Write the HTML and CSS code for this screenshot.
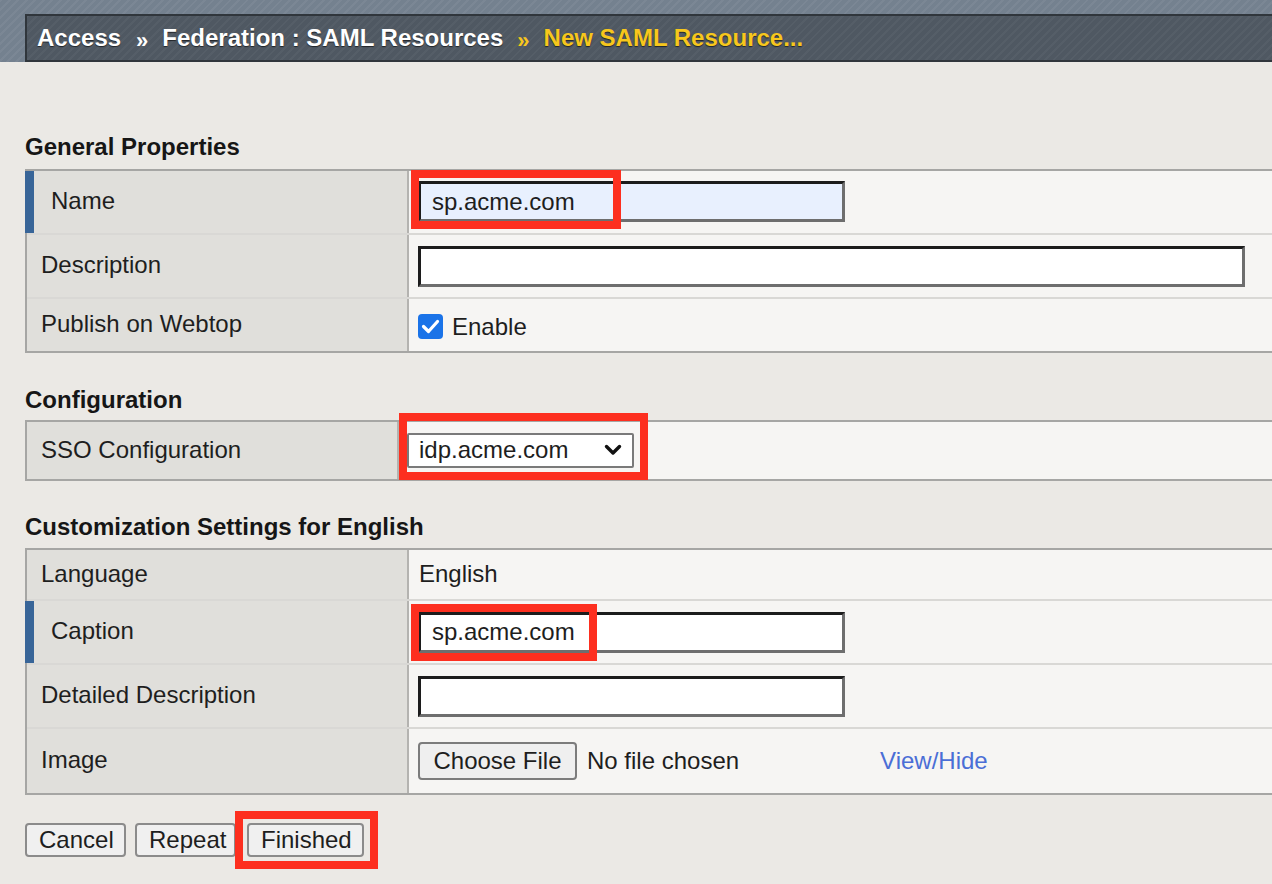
FILE: index.html
```html
<!DOCTYPE html>
<html lang="en">
<head>
<meta charset="utf-8">
<title>New SAML Resource</title>
<link rel="stylesheet" href="styles.css">
</head>
<body>
<header class="topbar">
  <div class="crumbs">
    <span class="crumb">Access</span>
    <span class="sep">»</span>
    <span class="crumb">Federation : SAML Resources</span>
    <span class="sep current">»</span>
    <span class="crumb current">New SAML Resource...</span>
  </div>
</header>

<main class="main">
  <section class="section sec-general">
    <h2 class="sec-title">General Properties</h2>
    <div class="props cols-wide">
      <div class="row h-62">
        <div class="lbl req">Name</div>
        <div class="val">
          <input class="field field-mid autofill" type="text" value="sp.acme.com">
          <span class="hl hl-name"></span>
        </div>
      </div>
      <div class="row h-64">
        <div class="lbl">Description</div>
        <div class="val">
          <input class="field field-long" type="text" value="">
        </div>
      </div>
      <div class="row h-54">
        <div class="lbl">Publish on Webtop</div>
        <div class="val">
          <span class="check">
            <svg width="25" height="25" viewBox="0 0 25 25"><rect x="0" y="0" width="25" height="25" rx="4" fill="#1a73e8"/><polyline points="5.5,12.5 10.5,17.5 19.5,7.5" fill="none" stroke="#fff" stroke-width="3.2" stroke-linecap="round" stroke-linejoin="round"/></svg>
          </span>
          <span class="check-label">Enable</span>
        </div>
      </div>
    </div>
  </section>

  <section class="section sec-config">
    <h2 class="sec-title">Configuration</h2>
    <div class="props cols-narrow">
      <div class="row h-57">
        <div class="lbl">SSO Configuration</div>
        <div class="val val-sel">
          <span class="select">
            <span class="select-text">idp.acme.com</span>
            <svg class="chev" width="18" height="12" viewBox="0 0 18 12"><polyline points="2.5,2.5 9,9 15.5,2.5" fill="none" stroke="#111" stroke-width="3.4" stroke-linecap="round" stroke-linejoin="round"/></svg>
          </span>
          <span class="hl hl-sel"></span>
        </div>
      </div>
    </div>
  </section>

  <section class="section sec-custom">
    <h2 class="sec-title">Customization Settings for English</h2>
    <div class="props cols-wide">
      <div class="row h-49">
        <div class="lbl">Language</div>
        <div class="val val-text">English</div>
      </div>
      <div class="row h-64">
        <div class="lbl req">Caption</div>
        <div class="val">
          <input class="field field-mid" type="text" value="sp.acme.com">
          <span class="hl hl-caption"></span>
        </div>
      </div>
      <div class="row h-64">
        <div class="lbl">Detailed Description</div>
        <div class="val">
          <input class="field field-mid" type="text" value="">
        </div>
      </div>
      <div class="row h-66">
        <div class="lbl">Image</div>
        <div class="val">
          <span class="filebtn">Choose File</span>
          <span class="nofile">No file chosen</span>
          <a class="link" href="#">View/Hide</a>
        </div>
      </div>
    </div>
  </section>

  <div class="actions">
    <button class="btn" type="button">Cancel</button>
    <button class="btn" type="button">Repeat</button>
    <span class="btn-wrap">
      <button class="btn" type="button">Finished</button>
      <span class="hl hl-finish"></span>
    </span>
  </div>
</main>
</body>
</html>
```

FILE: styles.css
```css
html, body {
  margin: 0;
  padding: 0;
}

body {
  width: 1272px;
  height: 884px;
  overflow: hidden;
  background: #ebe9e5;
  font-family: "Liberation Sans", Arial, sans-serif;
  font-size: 24px;
  color: #1e1e1e;
}

/* ---------- top bar ---------- */
.topbar {
  height: 62px;
  padding: 14px 0 0 25px;
  box-sizing: border-box;
  background:
    repeating-linear-gradient(135deg, rgba(255,255,255,0.05) 0 2px, rgba(0,0,0,0) 2px 6px),
    #74818f;
}

.crumbs {
  height: 48px;
  box-sizing: border-box;
  border: 2px solid #30363c;
  border-right: none;
  background:
    repeating-linear-gradient(135deg, rgba(255,255,255,0.035) 0 2px, rgba(0,0,0,0) 2px 6px),
    #4f5862;
  display: flex;
  align-items: center;
  padding-left: 10px;
  white-space: nowrap;
}

.crumb {
  font-weight: bold;
  font-size: 24px;
  color: #ffffff;
  text-shadow: 0 1px 1px rgba(0,0,0,0.6);
}

.crumb.current {
  color: #f7c71c;
}

.sep {
  font-weight: bold;
  font-size: 22px;
  color: #ffffff;
  margin: 5px 14px 0 15px;
}

.sep.current {
  color: #f7c71c;
  margin: 5px 14px 0 14px;
}

/* ---------- main ---------- */
.main {
  padding-left: 25px;
}

.section {
  margin: 0;
}

.sec-general {
  padding-top: 71px;
}

.sec-config {
  padding-top: 33px;
}

.sec-custom {
  padding-top: 32px;
}

.sec-title {
  margin: 0 0 8px 0;
  font-size: 24px;
  line-height: 28px;
  font-weight: bold;
  color: #161616;
}

.sec-config .sec-title {
  margin-bottom: 6px;
}

.sec-custom .sec-title {
  margin-bottom: 7px;
}

.props {
  border: 2px solid #a6a6a4;
  border-right: none;
  background: #f6f5f3;
}

.row {
  display: grid;
  box-sizing: border-box;
  border-top: 2px solid #d9d8d5;
}

.row:first-child {
  border-top: none;
}

.cols-wide .row {
  grid-template-columns: 382px 1fr;
}

.cols-narrow .row {
  grid-template-columns: 372px 1fr;
}

.h-49 { height: 49px; }
.h-54 { height: 54px; }
.h-57 { height: 57px; }
.h-62 { height: 62px; }
.h-64 { height: 64px; }
.h-66 { height: 66px; }

.lbl {
  background: #e0dfdb;
  border-right: 2px solid #b4b3b0;
  display: flex;
  align-items: center;
  padding-left: 14px;
  padding-bottom: 2px;
  color: #1e1e1e;
}

.lbl.req {
  border-left: 9px solid #386598;
  margin-left: -2px;
  padding-left: 17px;
}

.val {
  position: relative;
  display: flex;
  align-items: center;
  padding-left: 9px;
  background: #f6f5f3;
}

.val-sel {
  padding-left: 8px;
}

.val-text {
  padding-left: 10px;
  padding-bottom: 2px;
}

/* ---------- inputs ---------- */
.field {
  box-sizing: border-box;
  height: 41px;
  border: 3px solid;
  border-color: #1c1c1c #6e6e6e #6e6e6e #1c1c1c;
  background: #ffffff;
  font-family: "Liberation Sans", Arial, sans-serif;
  font-size: 24px;
  color: #1e1e1e;
  padding: 0 0 0 11px;
  margin: 0;
  outline: none;
}

.field-mid {
  width: 427px;
}

.field-long {
  width: 827px;
}

.autofill {
  background: #e8f0fe;
  height: 41px;
  margin-top: -1px;
}

.check {
  display: inline-flex;
  width: 25px;
  height: 25px;
  margin-top: 2px;
}

.check-label {
  margin-left: 9px;
  margin-top: 4px;
}

.select {
  box-sizing: border-box;
  width: 227px;
  height: 35px;
  background: #ffffff;
  border: 2px solid #7a7a7a;
  border-radius: 2px;
  display: flex;
  align-items: center;
  justify-content: space-between;
  padding: 0 10px 0 10px;
  margin-top: -1px;
}

.select-text {
  color: #1e1e1e;
}

.chev {
  display: block;
}

.filebtn {
  box-sizing: border-box;
  height: 38px;
  width: 159px;
  background: #efefef;
  border: 2px solid #7c7c7c;
  border-radius: 4px;
  display: inline-flex;
  align-items: center;
  justify-content: center;
  color: #1e1e1e;
}

.nofile {
  margin-left: 10px;
}

.link {
  margin-left: 141px;
  color: #4a6ed6;
  text-decoration: none;
}

/* ---------- highlight boxes ---------- */
.hl {
  position: absolute;
  box-sizing: border-box;
  border: 8px solid #fd2f1f;
  pointer-events: none;
}

.hl-name {
  left: 2px;
  top: -1px;
  width: 210px;
  height: 59px;
}

.hl-sel {
  left: 0;
  top: -9px;
  width: 249px;
  height: 67px;
}

.hl-caption {
  left: 2px;
  top: 3px;
  width: 186px;
  height: 57px;
}

/* ---------- actions ---------- */
.actions {
  display: flex;
  align-items: center;
  padding-top: 28px;
}

.btn {
  box-sizing: border-box;
  height: 34px;
  background: #f0f0f0;
  border: 2px solid #8b8b8b;
  border-radius: 4px;
  font-family: "Liberation Sans", Arial, sans-serif;
  font-size: 24px;
  color: #1e1e1e;
  padding: 0 12px;
  margin: 0 9px 0 0;
  line-height: 28px;
  width: 101px;
}

.btn-wrap {
  position: relative;
  display: inline-flex;
  margin-left: 2px;
}

.btn-wrap .btn {
  width: 117px;
  margin: 0;
}

.hl-finish {
  left: -12px;
  top: -12px;
  width: 143px;
  height: 58px;
}
```
